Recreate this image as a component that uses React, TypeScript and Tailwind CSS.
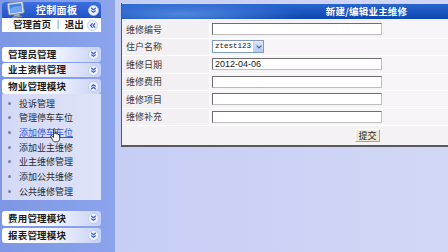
import React from 'react';

const cjk = '"Noto Sans CJK SC", "Noto Sans", sans-serif';

function Chevron({ dir = 'down' }: { dir?: 'down' | 'up' | 'left' }) {
  const rot = dir === 'down' ? 0 : dir === 'up' ? 180 : 90;
  return (
    <svg width="11" height="11" viewBox="0 0 11 11">
      <circle cx="5.5" cy="5.5" r="5" fill="#eef2fd" stroke="#b9c6ef" strokeWidth="0.8" />
      <g transform={`rotate(${rot} 5.5 5.5)`} fill="none" stroke="#3a5fc8" strokeWidth="1.2" strokeLinecap="round" strokeLinejoin="round">
        <path d="M3.6 3.2 L5.5 4.8 L7.4 3.2" />
        <path d="M3.6 5.8 L5.5 7.4 L7.4 5.8" />
      </g>
    </svg>
  );
}

function MenuHeader({ label, dir = 'down', h = 'h-[15px]', mt }: { label: string; dir?: 'down' | 'up'; h?: string; mt: string }) {
  return (
    <div
      className={`${mt} ${h} flex items-center justify-between pl-[6px] pr-[2px] rounded-[3px] bg-gradient-to-r from-white via-[#f3f5fd] to-[#c6d1f6]`}
    >
      <span className="text-[9.5px] font-bold text-[#1b1b1b] leading-none tracking-[0.2px]">{label}</span>
      <Chevron dir={dir} />
    </div>
  );
}

function MonitorIcon() {
  return (
    <svg width="22" height="20" viewBox="0 0 22 20" className="absolute left-[4px] -top-[2px]">
      <g transform="rotate(-8 11 10)">
        <rect x="2" y="2" width="16" height="12" rx="1.5" fill="#d9dde6" stroke="#7a8091" strokeWidth="0.8" />
        <rect x="4" y="3.8" width="12" height="8.4" fill="#3f7fe6" />
        <path d="M4 8 Q9 5 16 7 L16 12.2 L4 12.2 Z" fill="#6ea4f2" />
        <rect x="7" y="14" width="6" height="2" fill="#a5abb8" />
        <rect x="5" y="16" width="10" height="1.6" rx="0.6" fill="#8c92a0" />
      </g>
    </svg>
  );
}

function HandCursor() {
  return (
    <svg width="12" height="15" viewBox="0 0 12 15" className="absolute left-[50px] top-[128px]">
      <path
        d="M3.5 1.2 C3.5 0.4 5 0.4 5 1.2 L5 6 L5.4 4.6 C5.4 3.9 6.8 3.9 6.8 4.6 L6.8 6.2 C6.8 5.5 8.2 5.5 8.2 6.2 L8.2 7 C8.2 6.3 9.6 6.3 9.6 7 L9.6 10.5 C9.6 12.5 8.6 13.8 7.4 13.8 L4.8 13.8 C3.8 13.8 3.2 13 2.6 12 L0.8 8.8 C0.4 8 1.4 7.3 2 7.9 L3.5 9.4 Z"
        fill="#ffffff"
        stroke="#111"
        strokeWidth="0.8"
        strokeLinejoin="round"
      />
    </svg>
  );
}

const items = ['投诉管理', '管理停车车位', '添加停车车位', '添加业主维修', '业主维修管理', '添加公共维修', '公共维修管理'];

function Sidebar() {
  return (
    <div className="w-[115px] shrink-0 h-full bg-gradient-to-r from-[#7d97e4] to-[#8ba4ec] pl-[2px] pt-[2px] relative">
      <div className="w-[99px]">
        <div className="relative h-[16px] rounded-t-[4px] bg-gradient-to-b from-[#3c6fe0] to-[#1f52c6] flex items-center justify-between pr-[2px]">
          <MonitorIcon />
          <span className="ml-[34px] text-[10px] font-bold text-white leading-none tracking-[0.3px]">控制面板</span>
          <Chevron dir="down" />
        </div>
        <div className="h-[14px] bg-white flex items-center justify-between pl-[11px] pr-[3px]">
          <span className="text-[9.5px] font-bold text-[#1b1b1b] leading-none">管理首页 ｜ 退出</span>
          <Chevron dir="left" />
        </div>
        <MenuHeader label="管理员管理" mt="mt-[15px]" />
        <MenuHeader label="业主资料管理" mt="mt-[1px]" h="h-[14px]" />
        <MenuHeader label="物业管理模块" mt="mt-[2px]" dir="up" />
        <div className="h-[106px] bg-gradient-to-r from-[#d3d9f5] to-[#dfe3f8] pt-[2px]">
          {items.map((it, i) => (
            <div key={it} className="h-[14.67px] flex items-center pl-[6px]">
              <span className="w-[3px] h-[3px] rounded-full bg-[#7083b6] mr-[8px]" />
              <span
                className={`text-[9px] leading-none ${i === 2 ? 'text-[#3257d6] underline' : 'text-[#2b2b2b]'}`}
              >
                {it}
              </span>
            </div>
          ))}
        </div>
        <MenuHeader label="费用管理模块" mt="mt-[11px]" />
        <MenuHeader label="报表管理模块" mt="mt-[2px]" />
      </div>
      <HandCursor />
    </div>
  );
}

function TextBox({ value, w = 'w-[170px]' }: { value?: string; w?: string }) {
  return (
    <div
      className={`${w} h-[12px] bg-white border border-t-[#6e6e6e] border-l-[#6e6e6e] border-b-[#bdbdbd] border-r-[#bdbdbd] flex items-center pl-[2px]`}
    >
      {value && (
        <span className="text-[9px] leading-none text-[#222]" style={{ fontFamily: '"Liberation Sans", Arial, sans-serif' }}>
          {value}
        </span>
      )}
    </div>
  );
}

function SelectBox() {
  return (
    <div className="w-[52px] h-[13px] bg-white border border-[#7f9db9] flex items-center">
      <span className="flex-1 pl-[2px] text-[7.5px] leading-none text-[#111]" style={{ fontFamily: '"Liberation Mono", "DejaVu Sans Mono", monospace' }}>
        ztest123
      </span>
      <div className="w-[10px] h-full bg-gradient-to-b from-[#dce6fb] to-[#b5c8f3] border-l border-[#c3d3f5] flex items-center justify-center">
        <svg width="6" height="4" viewBox="0 0 6 4">
          <path d="M0.6 0.6 L3 3 L5.4 0.6" fill="none" stroke="#4d6185" strokeWidth="1.2" />
        </svg>
      </div>
    </div>
  );
}

const rows: { label: string; field: React.ReactNode }[] = [
  { label: '维修编号', field: <TextBox /> },
  { label: '住户名称', field: <SelectBox /> },
  { label: '维修日期', field: <TextBox value="2012-04-06" /> },
  { label: '维修费用', field: <TextBox /> },
  { label: '维修项目', field: <TextBox /> },
  { label: '维修补充', field: <TextBox /> },
];

function EditPanel() {
  return (
    <div className="mt-[3px] w-[490px] shrink-0 h-[144px] bg-[#f5f2f5] border-l border-b-2 border-l-[#5a5a5a] border-b-[#5a5a5a] flex flex-col">
      <div className="h-[16px] border-t border-[#c9d6f3] bg-[radial-gradient(ellipse_120px_14px_at_60px_10px,#4f86df,transparent),linear-gradient(to_bottom,#2a66cf,#0c47b0)] flex items-center justify-center">
        <span className="text-[9.5px] font-bold text-white leading-none tracking-[0.2px]">新建/编辑业主维修</span>
      </div>
      <div className="h-[2px]" />
      {rows.map((r) => (
        <div key={r.label} className="h-[17.5px] flex border-b border-white">
          <div className="w-[88px] flex items-center pl-[4px] bg-[#f3f0f3] border-r border-white">
            <span className="text-[9px] leading-none text-[#3a3a3a]">{r.label}</span>
          </div>
          <div className="flex-1 flex items-center pl-[2px] bg-[#f6f4f6]">{r.field}</div>
        </div>
      ))}
      <div className="flex-1 flex items-center pl-[233px]">
        <button className="w-[25px] h-[13px] bg-[#ece9d8] border border-t-white border-l-white border-b-[#a9a594] border-r-[#a9a594] flex items-center justify-center">
          <span className="text-[9px] leading-none text-[#222]">提交</span>
        </button>
      </div>
    </div>
  );
}

export default function App() {
  return (
    <div className="w-[448px] h-[252px] overflow-hidden flex bg-[#cdd3f6]" style={{ fontFamily: cjk }}>
      <Sidebar />
      <div className="flex-1 h-full pl-[6px] bg-gradient-to-r from-[#c7cef4] to-[#d2d7f6] flex items-start overflow-hidden">
        <EditPanel />
      </div>
    </div>
  );
}
